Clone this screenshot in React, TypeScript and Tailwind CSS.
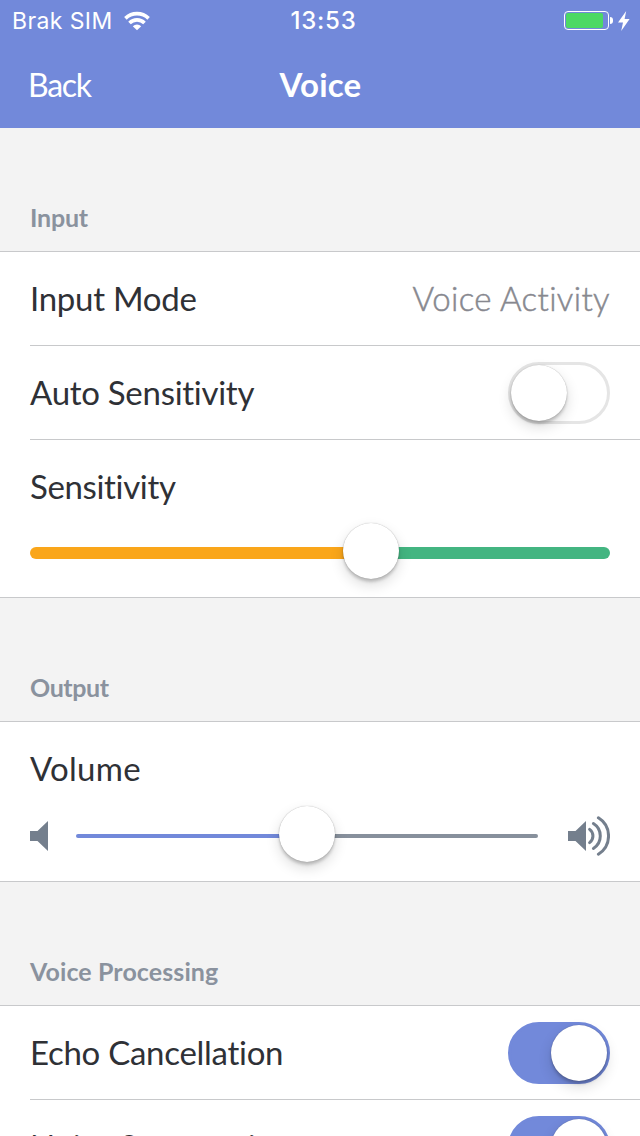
import clsx from "clsx";
import type { ReactNode } from "react";

function StatusBar() {
  return (
    <div className="grid h-10 grid-cols-3 items-center pl-3 pr-2.5 font-['Inter',sans-serif] text-[23px] leading-10 text-white">
      <div className="flex items-center gap-[11px]">
        <span className="pt-px tracking-[0.4px]">Brak SIM</span>
        <svg width="26" height="20" viewBox="0 0 26 20" fill="none" stroke="#fff" strokeWidth="3.6">
          <path d="M1.4 7.4a16.6 16.6 0 0 1 23.2 0" />
          <path d="M5.5 12a10.6 10.6 0 0 1 15 0" />
          <path d="M13 19.2 8.8 15.2a6 6 0 0 1 8.4 0z" fill="#fff" stroke="none" />
        </svg>
      </div>
      <span className="pl-[5px] text-center text-[24px] font-medium tracking-[0.8px]">13:53</span>
      <div className="flex items-center justify-end">
        <div className="h-[19px] w-[45px] rounded-[4px] border border-white p-px">
          <div className="h-full w-[37px] rounded-[2px] bg-[#4cd964]" />
        </div>
        <div className="ml-px h-[7px] w-[3px] rounded-r-full bg-white" />
        <svg className="ml-[5px]" width="12" height="20" viewBox="0 0 12 20" fill="#fff">
          <path d="M8.2 0 0 11.6h5L3.2 20 11.6 8H6.6z" />
        </svg>
      </div>
    </div>
  );
}

function NavBar() {
  return (
    <div className="grid h-[88px] grid-cols-3 items-center px-7 text-[33px] leading-[84px] text-white">
      <span className="pt-0.5 text-[32px] tracking-[-1.3px]">Back</span>
      <span className="pl-px text-center font-bold tracking-[0.2px]">Voice</span>
    </div>
  );
}

function SectionHeader({ title, className }: { title: string; className?: string }) {
  return (
    <h2
      className={clsx(
        "flex h-[124px] items-end border-b border-[#c8c9cb] px-[30px] pb-[19px] text-[25px] font-bold leading-[30px] text-[#8a929e]",
        className,
      )}
    >
      {title}
    </h2>
  );
}

function Row({ label, last, children }: { label: string; last?: boolean; children?: ReactNode }) {
  return (
    <div className={clsx("bg-white", !last && "pl-[30px]")}>
      <div className={clsx("flex h-[94px] items-center justify-between border-b border-[#c8c9cb] pr-[30px]", last && "pl-[30px]")}>
        <span className="pb-0.5 tracking-[-0.28px]">{label}</span>
        {children}
      </div>
    </div>
  );
}

const thumb = "size-14 rounded-full bg-white shadow-[0_6px_14px_rgba(0,0,0,0.14),0_3px_3px_rgba(0,0,0,0.18),0_0_1px_rgba(0,0,0,0.35)]";

function Toggle({ on }: { on?: boolean }) {
  return (
    <div
      className={clsx(
        "flex h-[62px] w-[102px] items-center rounded-full border-[3px]",
        on ? "justify-end border-[#7289da] bg-[#7289da]" : "justify-start border-[#e5e5e5] bg-white",
      )}
    >
      <div className={thumb} />
    </div>
  );
}

function Speaker({ loud }: { loud?: boolean }) {
  return (
    <svg className="shrink-0" width={loud ? 42 : 18} height="40" viewBox={loud ? "0 0 42 40" : "0 0 18 40"} fill="none">
      <path d="M0 15h7.5L18 5v30L7.5 25H0z" fill="#747f8d" />
      {loud && (
        <g stroke="#747f8d" strokeWidth="3" strokeLinecap="round">
          <path d="M21.6 13.4a8.2 8.2 0 0 1 0 13.2" />
          <path d="M25.4 7.6a14.6 14.6 0 0 1 0 24.8" />
          <path d="M30.4 1.8a21.4 21.4 0 0 1 0 36.4" />
        </g>
      )}
    </svg>
  );
}

export default function App() {
  return (
    <div className="h-[1136px] w-[640px] overflow-hidden bg-[#f3f3f3] font-['Lato',sans-serif] text-[33px] leading-10 text-[#2f3136]">
      <header className="bg-[#7289da]">
        <StatusBar />
        <NavBar />
      </header>

      <SectionHeader title="Input" className="tracking-[-0.2px]" />
      <Row label="Input Mode">
        <span className="pb-0.5 font-light tracking-[0.35px] text-[#87888f] [-webkit-text-stroke:0.5px_#87888f]">Voice Activity</span>
      </Row>
      <Row label="Auto Sensitivity">
        <Toggle />
      </Row>
      <div className="h-[158px] border-b border-[#c8c9cb] bg-white px-[30px]">
        <div className="flex h-[93px] items-center pb-px tracking-[-0.35px]">Sensitivity</div>
        <div className="relative mt-3.5 flex h-3">
          <div className="w-[341px] rounded-l-full bg-[#faa61a]" />
          <div className="flex-1 rounded-r-full bg-[#43b581]" />
          <div className={clsx(thumb, "absolute -top-6 left-[313px]")} />
        </div>
      </div>

      <SectionHeader title="Output" className="tracking-[-0.4px]" />
      <div className="h-[160px] border-b border-[#c8c9cb] bg-white px-[30px]">
        <div className="flex h-[94px] items-center pb-0.5 tracking-[0.25px]">Volume</div>
        <div className="flex h-10 items-center">
          <Speaker />
          <div className="relative ml-7 mr-[30px] flex h-1 flex-1">
            <div className="w-[231px] rounded-l-full bg-[#7289da]" />
            <div className="flex-1 rounded-r-full bg-[#87909c]" />
            <div className={clsx(thumb, "absolute -top-7 left-[203px]")} />
          </div>
          <Speaker loud />
        </div>
      </div>

      <SectionHeader title="Voice Processing" className="tracking-[0.1px]" />
      <Row label="Echo Cancellation">
        <Toggle on />
      </Row>
      <Row label="Noise Suppression" last>
        <Toggle on />
      </Row>
    </div>
  );
}
